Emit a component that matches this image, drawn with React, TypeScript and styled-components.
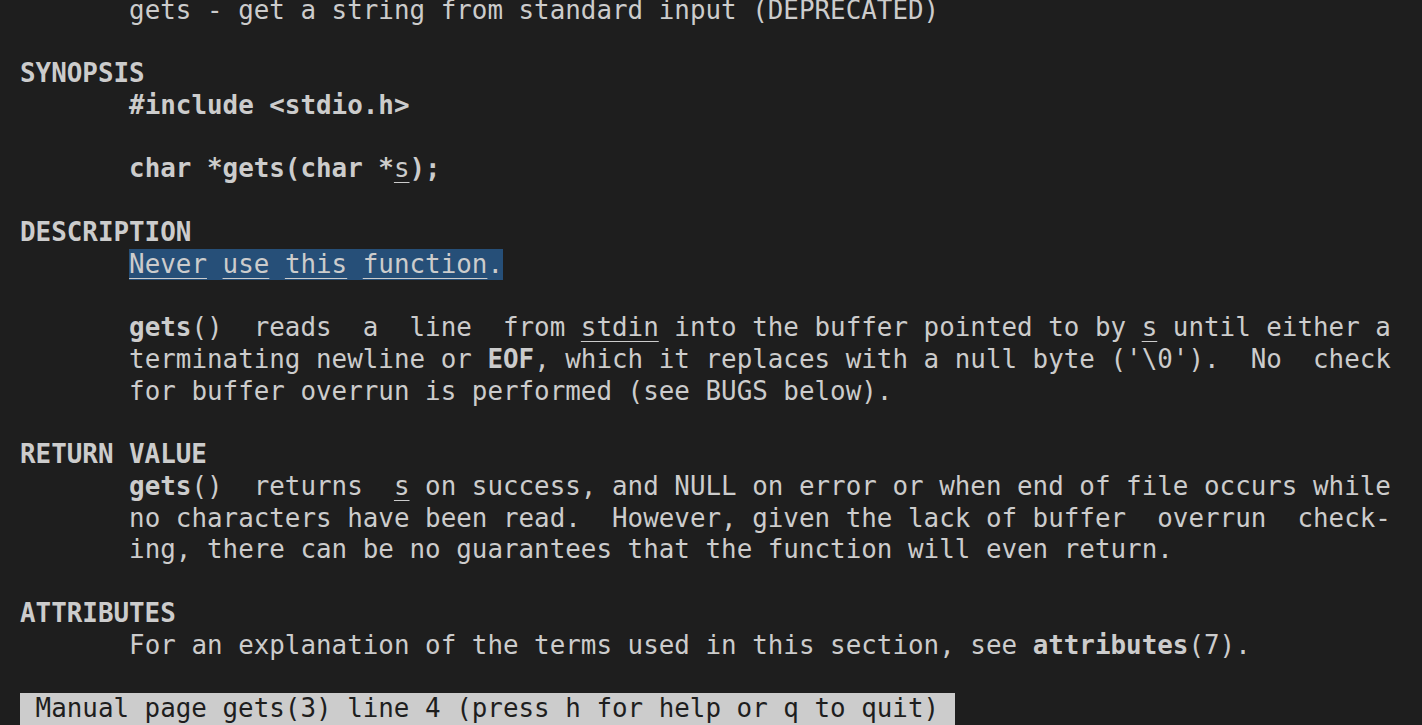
import React from "react";
import styled, { createGlobalStyle } from "styled-components";

const Global = createGlobalStyle`
  html, body {
    margin: 0;
    padding: 0;
    background: #1e1e1e;
    overflow: hidden;
  }
  body {
    width: 1422px;
    height: 725px;
  }
`;

const Viewport = styled.div`
  width: 1422px;
  height: 725px;
  overflow: hidden;
  background: #1e1e1e;
`;

const Terminal = styled.div`
  box-sizing: border-box;
  color: #cccccc;
  font-family: "DejaVu Sans Mono", "Liberation Mono", monospace;
  font-size: 25.88px;
  line-height: 31.75px;
  padding-left: 20px;
  display: flex;
  flex-direction: column;
  margin-top: -5.5px;
`;

const Line = styled.div<{ $indent?: boolean }>`
  white-space: pre;
  height: 31.75px;
  padding-left: ${(p) => (p.$indent ? "109.1px" : "0")};
`;

const B = styled.span`
  font-weight: bold;
`;

const U = styled.span`
  text-decoration: underline;
  text-decoration-thickness: 1px;
  text-underline-offset: 5px;
`;

const Selection = styled.span`
  background: #264f78;
  display: inline-block;
  height: 31.75px;
`;

const Status = styled.div`
  white-space: pre;
  height: 40px;
  align-self: flex-start;
  background: #cccccc;
  color: #1e1e1e;
`;

const Heading: React.FC<{ children: React.ReactNode }> = ({ children }) => (
  <Line>
    <B>{children}</B>
  </Line>
);

const Blank = () => <Line> </Line>;

export default function App() {
  return (
    <Viewport>
      <Global />
      <Terminal>
        <Line $indent>gets - get a string from standard input (DEPRECATED)</Line>
        <Blank />
        <Heading>SYNOPSIS</Heading>
        <Line $indent>
          <B>#include &lt;stdio.h&gt;</B>
        </Line>
        <Blank />
        <Line $indent>
          <B>char *gets(char *</B>
          <U>s</U>
          <B>);</B>
        </Line>
        <Blank />
        <Heading>DESCRIPTION</Heading>
        <Line $indent>
          <Selection>
            <U>Never</U> <U>use</U> <U>this</U> <U>function</U>.
          </Selection>
        </Line>
        <Blank />
        <Line $indent>
          <B>gets</B>
          {"()  reads  a  line  from "}
          <U>stdin</U>
          {" into the buffer pointed to by "}
          <U>s</U>
          {" until either a"}
        </Line>
        <Line $indent>
          {"terminating newline or "}
          <B>EOF</B>
          {", which it replaces with a null byte ('\\0').  No  check"}
        </Line>
        <Line $indent>for buffer overrun is performed (see BUGS below).</Line>
        <Blank />
        <Heading>RETURN VALUE</Heading>
        <Line $indent>
          <B>gets</B>
          {"()  returns  "}
          <U>s</U>
          {" on success, and NULL on error or when end of file occurs while"}
        </Line>
        <Line $indent>
          no characters have been read.  However, given the lack of buffer  overrun  check-
        </Line>
        <Line $indent>
          ing, there can be no guarantees that the function will even return.
        </Line>
        <Blank />
        <Heading>ATTRIBUTES</Heading>
        <Line $indent>
          {"For an explanation of the terms used in this section, see "}
          <B>attributes</B>
          {"(7)."}
        </Line>
        <Blank />
        <Status>{" Manual page gets(3) line 4 (press h for help or q to quit) "}</Status>
      </Terminal>
    </Viewport>
  );
}
